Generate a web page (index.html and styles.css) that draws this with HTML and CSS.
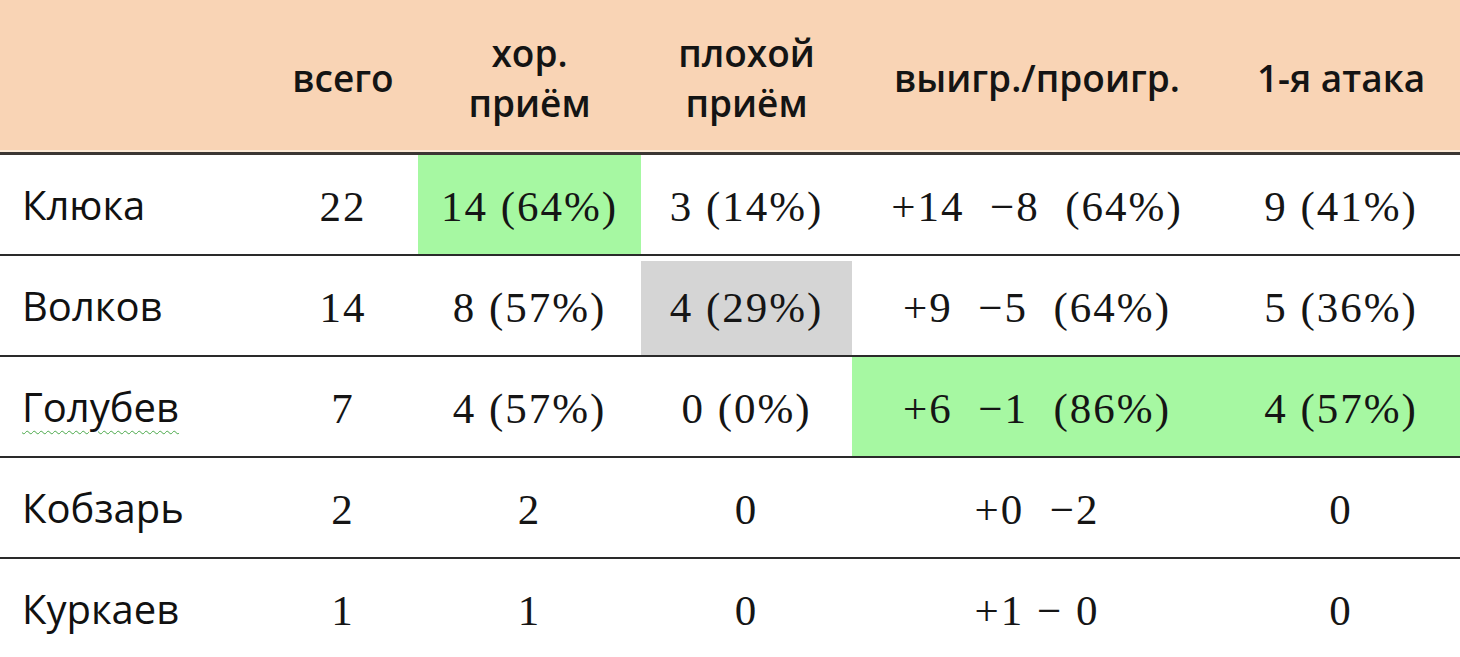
FILE: index.html
```html
<!DOCTYPE html>
<html lang="ru">
<head>
<meta charset="utf-8">
<title>Приём</title>
<link rel="stylesheet" href="styles.css">
</head>
<body>
<table class="stats">
  <colgroup>
    <col class="c-name"><col class="c-total"><col class="c-good"><col class="c-bad"><col class="c-win"><col class="c-att">
  </colgroup>
  <thead>
    <tr>
      <th></th>
      <th>всего</th>
      <th>хор.<br>приём</th>
      <th>плохой<br>приём</th>
      <th>выигр./проигр.</th>
      <th>1-я атака</th>
    </tr>
  </thead>
  <tbody>
    <tr>
      <td class="name">Клюка</td>
      <td class="num">22</td>
      <td class="num hl-green">14 (64%)</td>
      <td class="num">3 (14%)</td>
      <td class="num wl">+14 &nbsp;−8 &nbsp;(64%)</td>
      <td class="num">9 (41%)</td>
    </tr>
    <tr>
      <td class="name">Волков</td>
      <td class="num">14</td>
      <td class="num">8 (57%)</td>
      <td class="num hl-grey">4 (29%)</td>
      <td class="num wl">+9 &nbsp;−5 &nbsp;(64%)</td>
      <td class="num">5 (36%)</td>
    </tr>
    <tr>
      <td class="name"><span class="spell">Голубев</span></td>
      <td class="num">7</td>
      <td class="num">4 (57%)</td>
      <td class="num">0 (0%)</td>
      <td class="num wl hl-green">+6 &nbsp;−1 &nbsp;(86%)</td>
      <td class="num hl-green">4 (57%)</td>
    </tr>
    <tr>
      <td class="name">Кобзарь</td>
      <td class="num">2</td>
      <td class="num">2</td>
      <td class="num">0</td>
      <td class="num wl">+0 &nbsp;−2</td>
      <td class="num">0</td>
    </tr>
    <tr>
      <td class="name">Куркаев</td>
      <td class="num">1</td>
      <td class="num">1</td>
      <td class="num">0</td>
      <td class="num wl">+1 − 0</td>
      <td class="num">0</td>
    </tr>
  </tbody>
</table>
</body>
</html>
```
FILE: styles.css
```css
html, body {
  margin: 0;
  padding: 0;
  background: #ffffff;
}

.stats {
  width: 1460px;
  border-collapse: collapse;
  table-layout: fixed;
  color: #151515;
}

.c-name { width: 268px; }
.c-total { width: 150px; }
.c-good { width: 223px; }
.c-bad { width: 211px; }
.c-win { width: 370px; }
.c-att { width: 238px; }

.stats thead th {
  background: #f9d4b5;
  height: 148px;
  padding: 4px 0 0 0;
  font-family: "Open Sans", "DejaVu Sans", sans-serif;
  font-weight: 600;
  font-size: 37px;
  line-height: 50px;
  text-align: center;
  vertical-align: middle;
  color: #141414;
  border-bottom: 3px solid #3b3633;
  box-shadow: inset 0 -2px 0 #fbe9d6;
}

.stats tbody td {
  height: 95px;
  padding: 0;
  border-bottom: 2px solid #2a2a2a;
  vertical-align: middle;
}

.stats tbody tr:last-child td {
  border-bottom: none;
}

.name {
  padding-left: 22px !important;
  font-family: "Open Sans", "DejaVu Sans", sans-serif;
  font-weight: 500;
  font-size: 40px;
  text-align: left;
  color: #111;
}

.num {
  font-family: "Liberation Serif", "Times New Roman", serif;
  font-size: 43px;
  letter-spacing: 2px;
  text-align: center;
  padding-top: 4px !important;
}

.wl {
  white-space: pre;
}

.hl-green {
  background: #a6f8a2;
}

.hl-grey {
  background: #d5d5d5;
  box-shadow: inset 0 5px 0 #ffffff;
}

.spell {
  text-decoration: underline wavy #4aa84a;
  text-decoration-thickness: 1px;
  text-underline-offset: 8px;
}
```
